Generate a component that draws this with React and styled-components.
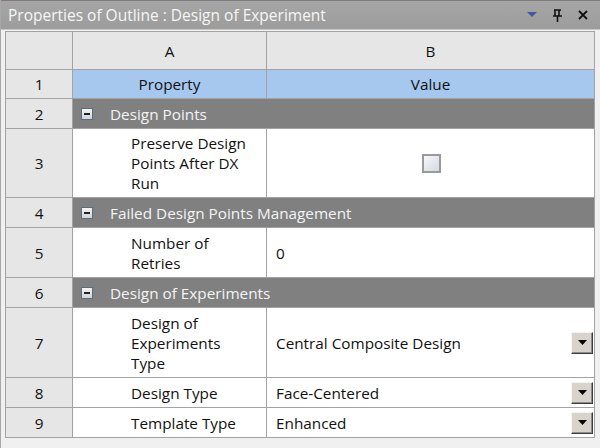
import styled, { createGlobalStyle } from "styled-components";

const GlobalStyle = createGlobalStyle`
    body {
        margin: 0;
        background: #f0f0f0;
        font-family: "Open Sans", "DejaVu Sans", sans-serif;
    }
`;

const rows = [
    { n: 1, kind: "head" },
    { n: 2, kind: "group", label: "Design Points" },
    { n: 3, prop: "Preserve Design Points After DX Run", value: "check", h: 69 },
    { n: 4, kind: "group", label: "Failed Design Points Management" },
    { n: 5, prop: "Number of Retries", value: "0", h: 50 },
    { n: 6, kind: "group", label: "Design of Experiments" },
    { n: 7, prop: "Design of Experiments Type", value: "Central Composite Design", drop: true, h: 70 },
    { n: 8, prop: "Design Type", value: "Face-Centered", drop: true, h: 30 },
    { n: 9, prop: "Template Type", value: "Enhanced", drop: true, h: 30 },
];

function App() {
    return (
        <>
            <GlobalStyle />
            <StPanel>
                <StTitleBar>
                    <span>Properties of Outline : Design of Experiment</span>
                    <StTitleIcons>
                        <svg width="10" height="6" viewBox="0 0 10 6">
                            <path d="M0 0h10L5 5z" fill="#3f58a8" />
                        </svg>
                        <svg width="11" height="13" viewBox="0 0 11 13">
                            <path d="M2 1h7M3 1v6M7 1v6M1 7h9M5.5 7v6" stroke="#111" strokeWidth="1.6" fill="none" />
                        </svg>
                        <svg width="10" height="10" viewBox="0 0 10 10">
                            <path d="M1 1l8 8M9 1l-8 8" stroke="#111" strokeWidth="1.8" />
                        </svg>
                    </StTitleIcons>
                </StTitleBar>
                <StBody>
                    <StTable>
                        <colgroup>
                            <col style={{ width: 67 }} />
                            <col style={{ width: 194 }} />
                            <col style={{ width: 328 }} />
                        </colgroup>
                        <tbody>
                            <tr>
                                <StRowNum $h={38} />
                                <StColHead>A</StColHead>
                                <StColHead>B</StColHead>
                            </tr>
                            {rows.map((row) => {
                                if (row.kind === "head") {
                                    return (
                                        <tr key={row.n}>
                                            <StRowNum $h={29}>{row.n}</StRowNum>
                                            <StHeadCell>Property</StHeadCell>
                                            <StHeadCell>Value</StHeadCell>
                                        </tr>
                                    );
                                }
                                if (row.kind === "group") {
                                    return (
                                        <tr key={row.n}>
                                            <StRowNum $h={30}>{row.n}</StRowNum>
                                            <StGroupCell colSpan={2}>
                                                <StGroupInner>
                                                    <StMinus />
                                                    {row.label}
                                                </StGroupInner>
                                            </StGroupCell>
                                        </tr>
                                    );
                                }
                                return (
                                    <tr key={row.n}>
                                        <StRowNum $h={row.h}>{row.n}</StRowNum>
                                        <StPropCell>{row.prop}</StPropCell>
                                        <StValueCell>
                                            {row.value === "check" ? (
                                                <StCheckWrap>
                                                    <StCheck />
                                                </StCheckWrap>
                                            ) : (
                                                <StValueInner>
                                                    <span>{row.value}</span>
                                                    {row.drop && (
                                                        <StDropButton>
                                                            <svg width="9" height="5" viewBox="0 0 9 5">
                                                                <path d="M0 0h9L4.5 5z" fill="#000" />
                                                            </svg>
                                                        </StDropButton>
                                                    )}
                                                </StValueInner>
                                            )}
                                        </StValueCell>
                                    </tr>
                                );
                            })}
                        </tbody>
                    </StTable>
                </StBody>
            </StPanel>
        </>
    );
}

export default App;

const StPanel = styled.div`
    width: 600px;
    height: 448px;
    box-sizing: border-box;
    border-left: 1px solid #a8a8a8;
    background: #f0f0f0;
    overflow: hidden;
`;
const StTitleBar = styled.div`
    height: 30px;
    box-sizing: border-box;
    border-top: 1px solid #7c7c7c;
    border-bottom: 1px solid #c8c8c8;
    background: linear-gradient(#a6a6a6, #9c9c9c);
    display: flex;
    align-items: center;
    justify-content: space-between;
    padding: 0 12px 0 7px;
    color: #f6f6f6;
    font-size: 15.5px;
`;
const StTitleIcons = styled.div`
    display: flex;
    align-items: center;
    gap: 15px;
`;
const StBody = styled.div`
    padding: 1px 6px 0 4px;
`;
const StTable = styled.table`
    border-collapse: collapse;
    table-layout: fixed;
    width: 589px;
    background: #fff;
    font-size: 15.3px;
    color: #111;
    td {
        border: 1px solid #a3a3a3;
        padding: 0;
    }
`;
const StRowNum = styled.td`
    height: ${(p) => p.$h - 1}px;
    background: #e6e6e6;
    text-align: center;
`;
const StColHead = styled.td`
    background: #e6e6e6;
    text-align: center;
`;
const StHeadCell = styled.td`
    background: #a6c8ef;
    text-align: center;
`;
const StGroupCell = styled.td`
    background: #808080;
    color: #f4f4f4;
`;
const StGroupInner = styled.div`
    display: flex;
    align-items: center;
    gap: 17px;
    padding-left: 8px;
`;
const StMinus = styled.span`
    width: 10px;
    height: 10px;
    border: 1px solid #5d6d80;
    background: linear-gradient(#f4f4f4, #cfd3d8);
    position: relative;
    &::after {
        content: "";
        position: absolute;
        left: 2px;
        right: 2px;
        top: 4px;
        height: 2px;
        background: #222;
    }
`;
const StPropCell = styled.td`
    padding: 4px 13px 4px 58px !important;
    line-height: 20px;
`;
const StValueCell = styled.td`
    padding: 0 !important;
`;
const StValueInner = styled.div`
    display: flex;
    align-items: center;
    justify-content: space-between;
    padding: 0 1px 0 9px;
`;
const StCheckWrap = styled.div`
    display: flex;
    justify-content: center;
    padding-left: 1px;
`;
const StCheck = styled.span`
    width: 15px;
    height: 15px;
    border: 2px solid #9a9a9a;
    background: linear-gradient(135deg, #f8f8fb, #d6d8e0);
`;
const StDropButton = styled.span`
    width: 22px;
    height: 22px;
    box-sizing: border-box;
    display: flex;
    align-items: center;
    justify-content: center;
    background: #d8d4cc;
    border: 1px solid;
    border-color: #f4f4f4 #3c3c3c #3c3c3c #f4f4f4;
    box-shadow: inset -1px -1px 0 #8c8c8c;
`;
